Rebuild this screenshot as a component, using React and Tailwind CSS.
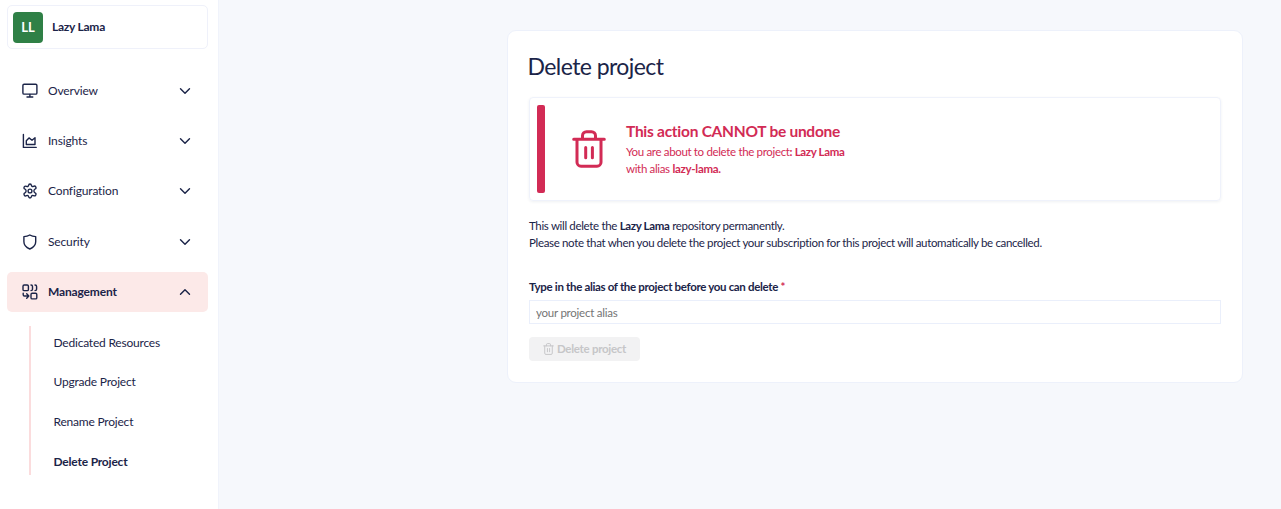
import React from "react";

const stroke = {
  fill: "none",
  stroke: "currentColor",
  strokeLinecap: "round",
  strokeLinejoin: "round",
};

function MonitorIcon() {
  return (
    <svg width="16" height="16" viewBox="0 0 16 16" strokeWidth="1.400" {...stroke}>
      <rect x="0.900" y="1.300" width="14" height="9.800" rx="1.200" />
      <path d="M7.900 11.400V14M5 14h5.800" />
    </svg>
  );
}

function ChartIcon() {
  return (
    <svg width="16" height="16" viewBox="0 0 16 16" strokeWidth="1.400" {...stroke}>
      <path d="M1.400 1.500v12.900h12.800" />
      <path d="M4.300 11.500V7.800l2.700-2.900 3 2.300 3-2.400v6.700z" />
    </svg>
  );
}

function GearIcon() {
  return (
    <svg width="16" height="16" viewBox="0 0 24 24" strokeWidth="2" {...stroke}>
      <path d="M10 3.200Q10 1.500 12 1.500T14 3.200Q14.400 6 17.200 5Q19.500 3.800 20.600 5.900T20.100 8.700Q17.800 10.300 17.800 12T20.100 15.300Q21.700 16.200 20.600 18.100T17.200 19Q14.400 18 14 20.800Q14 22.500 12 22.500T10 20.800Q9.600 18 6.800 19Q4.500 20.200 3.400 18.100T3.900 15.300Q6.200 13.700 6.200 12T3.900 8.700Q2.300 7.800 3.400 5.900T6.800 5Q9.600 6 10 3.200z" />
      <circle cx="12" cy="12" r="2.900" />
    </svg>
  );
}

function ShieldIcon() {
  return (
    <svg width="16" height="16" viewBox="0 0 16 16" strokeWidth="1.400" {...stroke}>
      <path d="M7.800 1c1.700 1.100 3.800 1.600 5.900 1.600v5.200c0 3.400-2.200 5.700-5.900 7.200-3.700-1.500-5.900-3.800-5.900-7.200V2.600C4 2.600 6.100 2.100 7.800 1z" />
    </svg>
  );
}

function ManageIcon() {
  return (
    <svg width="16" height="16" viewBox="0 0 16 16" strokeWidth="1.4" {...stroke}>
      <rect x="1" y="1" width="5.400" height="5.600" rx="1.200" />
      <rect x="9" y="9.300" width="5.800" height="5.600" rx="1.200" />
      <path d="M9 1c1.200 0 1.500.6 1.500 1.400v2.800c0 .8-.3 1.400-1.500 1.400M13 1c1.200 0 1.600.6 1.600 1.400v2.800c0 .8-.4 1.400-1.600 1.400" />
      <path d="M1.200 9.200v1.500c0 .8.5 1.300 1.300 1.300h4M4.700 9.800l2.100 2.200-2.100 2.200" />
    </svg>
  );
}

function Chevron({ up }) {
  return (
    <svg width="12" height="8" viewBox="0 0 12 8" strokeWidth="1.400" {...stroke}>
      <path d={up ? "M1.500 6.300 6 1.700l4.500 4.600" : "M1.500 1.700 6 6.300l4.500-4.600"} />
    </svg>
  );
}

function TrashIcon({ className }) {
  return (
    <svg className={className} viewBox="0 0 34 38" strokeWidth="3" {...stroke}>
      <path d="M1.700 9.200h30.600M5 9.200v23a4 4 0 0 0 4 4h16a4 4 0 0 0 4-4v-23M10.500 9V5.700a4 4 0 0 1 4-4h5a4 4 0 0 1 4 4V9M13.700 17.500v10.200M20.400 17.500v10.200" />
    </svg>
  );
}

const sections = [
  { label: "Overview", Icon: MonitorIcon },
  { label: "Insights", Icon: ChartIcon },
  { label: "Configuration", Icon: GearIcon },
  { label: "Security", Icon: ShieldIcon },
  { label: "Management", Icon: ManageIcon, active: true },
];

const pages = ["Dedicated Resources", "Upgrade Project", "Rename Project", "Delete Project"];

function Sidebar() {
  return (
    <aside className="w-[219px] shrink-0 border-r border-[#f0f3fb] bg-white pl-[7px] pr-2.5 pt-[5px]">
      <div className="flex h-11 items-center rounded-[5px] border border-[#eff1fa] pl-[5px]">
        <div className="flex h-[31px] w-[30px] items-center justify-center rounded-[4px] bg-[#2f8046] pt-px text-[13px] font-bold text-white">
          LL
        </div>
        <span className="ml-[9px] text-[12px] font-bold tracking-[-0.25px]">Lazy Lama</span>
      </div>
      <nav className="mt-[21.500px] flex flex-col gap-[10.350px]">
        {sections.map(({ label, Icon, active }) => (
          <div
            key={label}
            className={
              active
                ? "flex h-10 items-center rounded-[5px] bg-[#fce9e8] pl-[15px] pr-[17px] font-bold"
                : "flex h-10 items-center rounded-[5px] pl-[15px] pr-[17px]"
            }
          >
            <Icon />
            <span className="ml-2.5 grow text-[12px] tracking-[-0.15px]">{label}</span>
            <Chevron up={active} />
          </div>
        ))}
      </nav>
      <div className="mt-[14.200px] flex h-[149px] pl-[22px]">
        <div className="w-[1.500px] bg-[#fbdcdd]" />
        <div className="-mt-[3.200px] pl-[23px]">
          {pages.map((page) => (
            <div
              key={page}
              className={
                page === "Delete Project"
                  ? "flex h-[39.700px] items-center text-[12px] font-bold tracking-[-0.200px]"
                  : "flex h-[39.700px] items-center text-[12px] tracking-[-0.210px]"
              }
            >
              {page}
            </div>
          ))}
        </div>
      </div>
    </aside>
  );
}

export default function App() {
  return (
    <div className="flex h-[509px] overflow-hidden bg-[#f6f8fc] font-[Lato,sans-serif] text-[#1b2448]">
      <Sidebar />
      <main className="grow pl-[288px] pr-[38px] pt-[30px]">
        <section className="h-[353px] rounded-[9px] border border-[#edf1fb] bg-white px-[21px] pt-[19px]">
          <h1 className="-ml-[1.500px] text-[23px] leading-[32px] tracking-[-0.570px]">
            Delete project
          </h1>
          <div className="mt-[15px] flex h-[104px] items-center rounded-[4px] border border-[#eff2fb] pl-[7px] text-[#d22b55] shadow-[0_1px_3px_rgba(30,50,90,0.07)]">
            <div className="h-[88px] w-2 rounded-[2px] bg-[#d22b55]" />
            <TrashIcon className="ml-[27px] h-[38px] w-[34px]" />
            <div className="ml-[20px] text-[11.500px] leading-[17px] tracking-[-0.340px]">
              <h2 className="text-[15.500px] font-bold leading-[18px] tracking-[-0.270px]">
                This action CANNOT be undone
              </h2>
              <p className="mt-[3px]">
                You are about to delete the project<b>: Lazy Lama</b>
              </p>
              <p>
                with alias <b className="tracking-[-0.280px]">lazy-lama.</b>
              </p>
            </div>
          </div>
          <div className="mt-[16px] text-[11.500px] leading-[17px] tracking-[-0.335px]">
            <p>
              This will delete the <b>Lazy Lama</b> repository permanently.
            </p>
            <p>
              Please note that when you delete the project your subscription for this project will
              automatically be cancelled.
            </p>
          </div>
          <label
            className="mt-[27px] block text-[11.500px] font-bold leading-[17px] tracking-[-0.330px]"
            htmlFor="alias"
          >
            Type in the alias of the project before you can delete{" "}
            <span className="text-[#d22b55]">*</span>
          </label>
          <input
            id="alias"
            className="mt-[5px] block h-[24px] w-full border border-[#eaeffb] px-[6px] text-[11.500px] tracking-[-0.240px] outline-none placeholder:text-[#757575]"
            placeholder="your project alias"
          />
          <button
            disabled
            className="mt-[13px] flex h-6 w-[111px] items-center justify-center rounded-[4px] bg-[#f2f2f3] text-[11.500px] font-bold tracking-[-0.280px] text-[#c6c6c8]"
          >
            <TrashIcon className="mr-[3px] h-[12px] w-[11px]" />
            Delete project
          </button>
        </section>
      </main>
    </div>
  );
}
